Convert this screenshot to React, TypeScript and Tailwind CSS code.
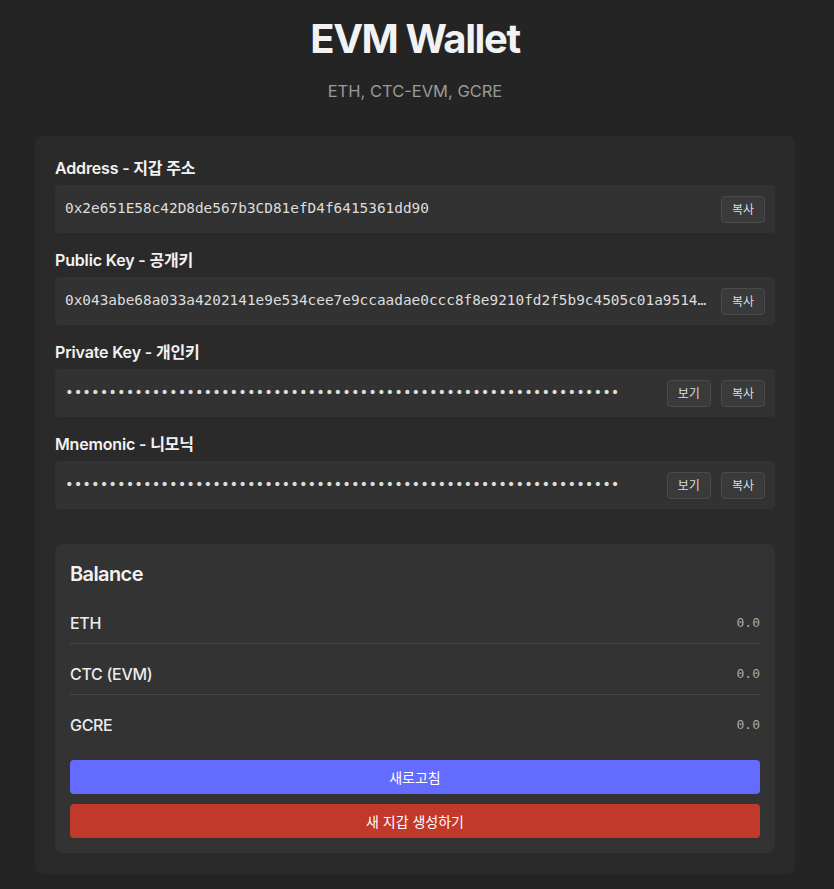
import React from "react";

const sans = { fontFamily: "Inter, 'Noto Sans CJK KR', sans-serif" } as React.CSSProperties;

function SmallButton({ children }: { children: React.ReactNode }) {
  return (
    <button className="shrink-0 h-[27px] px-[10px] text-[12px] leading-[17px] rounded-[4px] bg-[#3a3a3a] border border-[#4a4a4a] text-[#dddddd]">
      {children}
    </button>
  );
}

function Field({
  label,
  value,
  hidden,
}: {
  label: string;
  value: string;
  hidden?: boolean;
}) {
  return (
    <div className="mb-[15px]">
      <div className="text-[16px] leading-6 font-semibold text-[#f2f2f2] mb-[5px] tracking-[-0.01em]">{label}</div>
      <div className="flex items-center gap-[10px] h-[48px] pl-[10px] pr-[10px] rounded-[4px] bg-[#323232]">
        <div className="flex-1 min-w-0 font-['DejaVu_Sans_Mono',monospace] text-[14.4px] text-[#dddddd] whitespace-nowrap overflow-hidden text-ellipsis">
          {value}
        </div>
        {hidden && <SmallButton>보기</SmallButton>}
        <SmallButton>복사</SmallButton>
      </div>
    </div>
  );
}

function BalanceRow({ name, value, last }: { name: string; value: string; last?: boolean }) {
  return (
    <div
      className={
        last
          ? "flex items-center justify-between py-2"
          : "flex items-center justify-between py-2 border-b border-[#484848] mb-[10px]"
      }
    >
      <span className="text-[16px] leading-6 font-medium text-[#ececec] tracking-[-0.02em]">{name}</span>
      <span className="font-['DejaVu_Sans_Mono',monospace] text-[13px] text-[#aaaaaa]">{value}</span>
    </div>
  );
}

export default function App() {
  const dots = "•".repeat(64);
  return (
    <div className="min-h-[889px] bg-[#242424] flex justify-center pr-1" style={sans}>
      <div className="w-[760px] pt-[15px]">
        <h1 className="text-center text-[40px] leading-[48px] font-bold text-[#f2f2f2] tracking-[-0.035em]">EVM Wallet</h1>
        <p className="text-center text-[16.5px] leading-6 text-[#9a9a9a] mt-4">ETH, CTC-EVM, GCRE</p>
        <div className="mt-[33px] bg-[#2a2a2a] rounded-[8px] pt-5 px-5 pb-[21px] flex flex-col">
          <Field label="Address - 지갑 주소" value="0x2e651E58c42D8de567b3CD81efD4f6415361dd90" />
          <Field
            label="Public Key - 공개키"
            value="0x043abe68a033a4202141e9e534cee7e9ccaadae0ccc8f8e9210fd2f5b9c4505c01a95148f3c2a1b7e0d94c6f2a8b3e1d5c7f09a4b6e2d8c1f3a5b7d9e0c2f4a6b8d"
          />
          <Field label="Private Key - 개인키" value={dots} hidden />
          <Field label="Mnemonic - 니모닉" value={dots} hidden />

          <div className="mt-5 bg-[#333333] rounded-[8px] p-[15px] flex flex-col">
            <h3 className="text-[20px] leading-[30px] font-semibold text-[#f2f2f2] mb-[14px] tracking-[-0.03em]">Balance</h3>
            <BalanceRow name="ETH" value="0.0" />
            <BalanceRow name="CTC (EVM)" value="0.0" />
            <BalanceRow name="GCRE" value="0.0" last />
            <div className="mt-[15px] flex flex-col gap-[10px]">
              <button className="h-[34px] rounded-[4px] bg-[#646cff] text-white text-[14px]">새로고침</button>
              <button className="h-[34px] rounded-[4px] bg-[#c0392b] text-white text-[14px]">새 지갑 생성하기</button>
            </div>
          </div>
        </div>
      </div>
    </div>
  );
}
